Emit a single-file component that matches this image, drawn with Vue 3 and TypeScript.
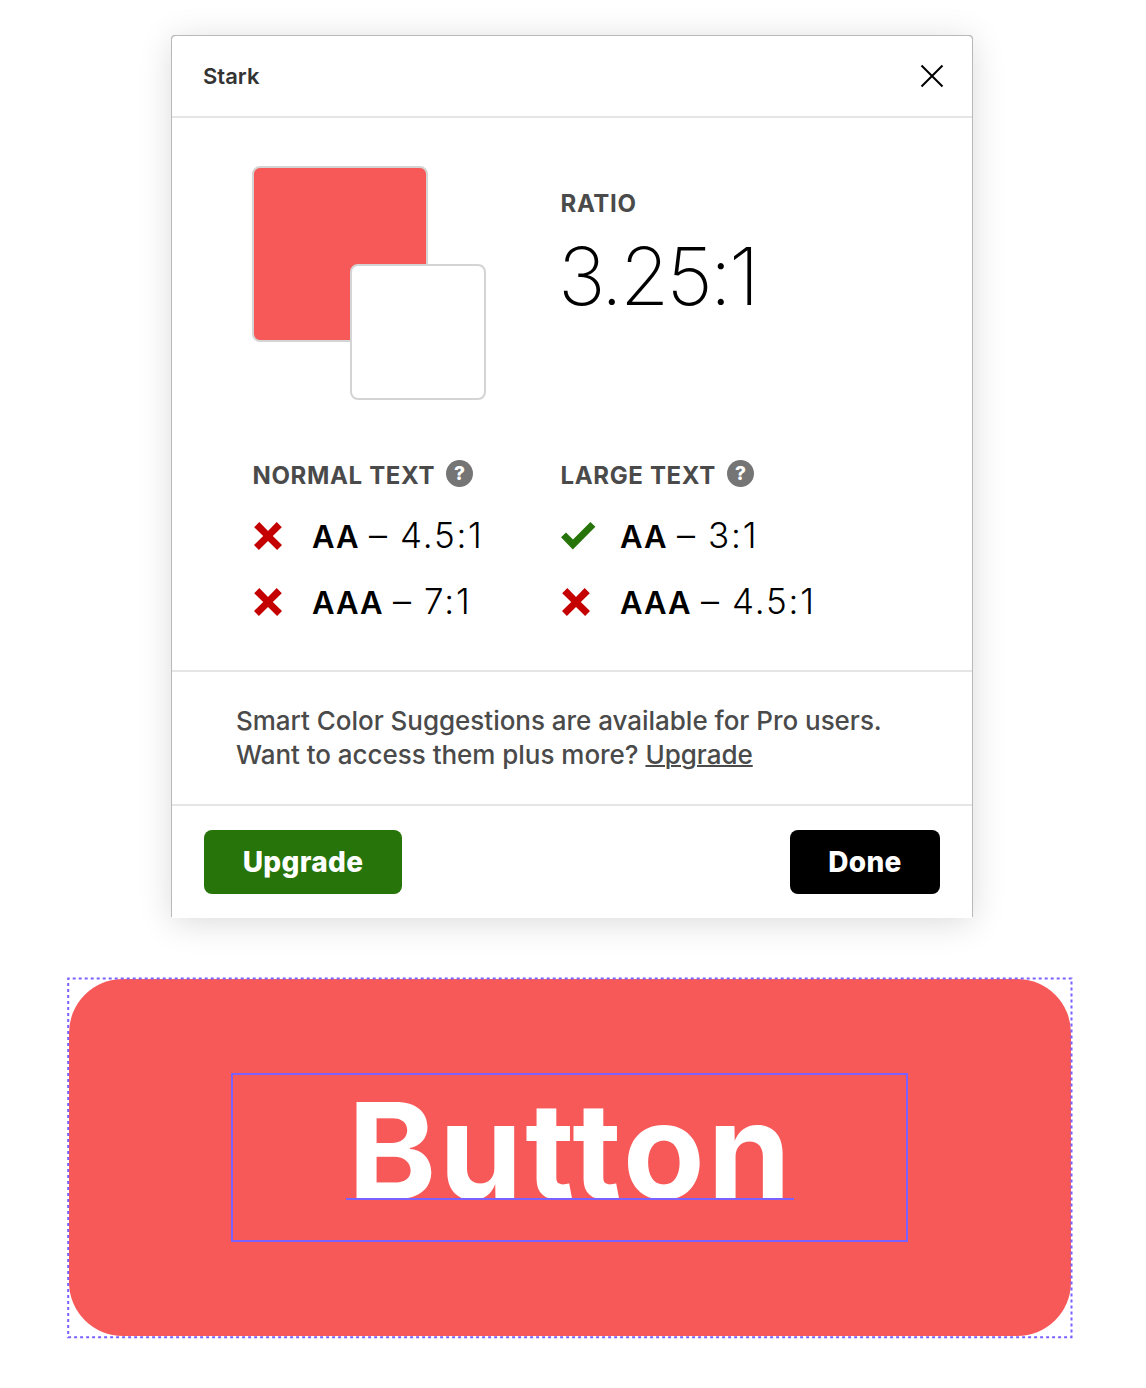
<script setup lang="ts">
interface Level {
  name: string
  ratio: string
  pass: boolean
}
interface Group {
  title: string
  levels: Level[]
}

const groups: Group[] = [
  {
    title: 'NORMAL TEXT',
    levels: [
      { name: 'AA', ratio: '4.5:1', pass: false },
      { name: 'AAA', ratio: '7:1', pass: false },
    ],
  },
  {
    title: 'LARGE TEXT',
    levels: [
      { name: 'AA', ratio: '3:1', pass: true },
      { name: 'AAA', ratio: '4.5:1', pass: false },
    ],
  },
]
</script>

<template>
  <div class="page">
    <section class="dialog">
      <header class="head">
        <h1 class="title">Stark</h1>
        <svg class="close" width="24" height="24" viewBox="0 0 24 24">
          <path d="M1.5 1.5 22.5 22.5M22.5 1.5 1.5 22.5" stroke="#000" stroke-width="2" fill="none" />
        </svg>
      </header>

      <div class="main">
        <div class="summary">
          <div class="swatches">
            <div class="swatch fg"></div>
            <div class="swatch bg"></div>
          </div>
          <div class="ratio">
            <div class="label">RATIO</div>
            <div class="value">3.25:1</div>
          </div>
        </div>

        <div class="groups">
          <div v-for="g in groups" :key="g.title" class="group">
            <div class="group-head">
              <span class="label">{{ g.title }}</span>
              <span class="help">?</span>
            </div>
            <div v-for="l in g.levels" :key="l.name" class="level">
              <span class="mark">
                <svg v-if="l.pass" class="tick" width="36" height="28" viewBox="0 0 36 28">
                  <path d="M0 15.2 5 10.4 12 17.4 29.4 0 34.4 4.8 11.8 27.4Z" fill="#27740a" />
                </svg>
                <svg v-else width="28" height="28" viewBox="0 0 28 28">
                  <path d="M5.3 0 14 8.9 22.7 0 27.8 5.2 18.8 14 28 22.9 23.1 28 14 18.9 4.9 28 0 22.9 9.2 14.1.2 5.2Z" fill="#c40000" />
                </svg>
              </span>
              <b class="name">{{ l.name }}</b>
              <span class="dash">–</span>
              <span class="need">{{ l.ratio }}</span>
            </div>
          </div>
        </div>
      </div>

      <p class="promo">
        Smart Color Suggestions are available for Pro users.<br />
        Want to access them plus more? <a class="link">Upgrade</a>
      </p>

      <footer class="foot">
        <button class="btn green">Upgrade</button>
        <button class="btn black">Done</button>
      </footer>
    </section>

    <section class="canvas">
      <div class="shape">
        <div class="textbox">
          <span class="caption">Button<i class="baseline"></i></span>
        </div>
      </div>
      <svg class="outline" width="1006" height="362" viewBox="0 0 1006 362">
        <rect x="1.2" y="1.4" width="1003.3" height="358.8" fill="none" stroke="#7b61ff" stroke-width="2" stroke-dasharray="3 3" stroke-dashoffset="1.5" />
      </svg>
    </section>
  </div>
</template>

<style>
body {
  margin: 0;
  background: #fff;
}
</style>

<style scoped>
.page {
  box-sizing: border-box;
  width: 1146px;
  height: 1388px;
  padding-top: 36px;
  overflow: hidden;
  background: #fff;
  font-family: Inter, "Liberation Sans", sans-serif;
  -webkit-font-smoothing: antialiased;
}
.dialog {
  width: 800px;
  height: 882px;
  margin-left: 172px;
  display: flex;
  flex-direction: column;
  background: #fff;
  border-radius: 4px 4px 0 0;
  box-shadow: 0 -1px 0 0 #b9b9b9, 1px -1px 0 0 #b9b9b9, -1px -1px 0 0 #b9b9b9, 0 4px 34px rgba(0, 0, 0, 0.15);
}
.head {
  box-sizing: border-box;
  height: 82px;
  padding: 0 28px 0 31px;
  display: flex;
  align-items: center;
  justify-content: space-between;
  border-bottom: 2px solid #e5e5e5;
}
.title {
  margin: 0;
  font-size: 22px;
  line-height: 28px;
  font-weight: 600;
  color: #333;
}
.close {
  display: block;
}
.main {
  box-sizing: border-box;
  height: 554px;
  padding: 48px 80px 0;
  border-bottom: 2px solid #e5e5e5;
}
.summary {
  display: flex;
  height: 234px;
}
.swatches {
  position: relative;
  width: 308px;
}
.swatch {
  box-sizing: border-box;
  border: 2px solid #d4d4d4;
  border-radius: 8px;
}
.fg {
  width: 176px;
  height: 176px;
  background: #f75959;
}
.bg {
  position: absolute;
  left: 98px;
  top: 98px;
  width: 136px;
  height: 136px;
  background: #fff;
}
.ratio {
  padding-top: 23px;
}
.label {
  margin-left: 0.5px;
  font-size: 24px;
  line-height: 30px;
  font-weight: 700;
  letter-spacing: 0.65px;
  color: #4a4a4a;
}
.value {
  margin: 8px 0 0 -2px;
  font-size: 80px;
  line-height: 98px;
  font-weight: 200;
  letter-spacing: -2.9px;
  color: #000;
}
.groups {
  display: flex;
  padding-top: 58px;
}
.group {
  width: 308px;
}
.group-head {
  display: flex;
  align-items: flex-start;
  gap: 11px;
  height: 44px;
  padding-top: 3px;
  box-sizing: border-box;
  white-space: nowrap;
}
.help {
  width: 27px;
  height: 27px;
  margin-top: -1px;
  border-radius: 50%;
  background: #757575;
  color: #fff;
  font-size: 19px;
  line-height: 27px;
  font-weight: 800;
  text-align: center;
}
.level {
  display: flex;
  align-items: baseline;
  height: 66px;
  line-height: 66px;
  white-space: nowrap;
  color: #000;
}
.mark {
  width: 60px;
  display: flex;
  align-self: center;
  padding: 1px 0 0 2px;
  box-sizing: border-box;
}
.tick {
  margin-left: -1px;
}
.name {
  font-size: 31px;
  font-weight: 600;
  letter-spacing: 1px;
}
.dash {
  margin-left: 9.5px;
  font-size: 36px;
  font-weight: 300;
}
.need {
  margin-left: 13px;
  font-size: 35px;
  font-weight: 300;
  letter-spacing: 1.8px;
}
.promo {
  box-sizing: border-box;
  height: 134px;
  margin: 0;
  padding: 32px 64px 0;
  border-bottom: 2px solid #e5e5e5;
  font-size: 26px;
  line-height: 34px;
  font-weight: 500;
  letter-spacing: -0.03px;
  color: #4a4a4a;
  white-space: nowrap;
}
.link {
  text-decoration: underline;
  text-decoration-thickness: 2px;
}
.foot {
  display: flex;
  justify-content: space-between;
  padding: 24px 32px;
}
.btn {
  height: 64px;
  padding: 0;
  border: 0;
  border-radius: 8px;
  font: 800 28px/64px Inter, sans-serif;
  letter-spacing: 0.3px;
  color: #fff;
}
.green {
  width: 198px;
  background: #27740a;
}
.black {
  width: 150px;
  background: #000;
}
.canvas {
  position: relative;
  width: 1006px;
  height: 362px;
  margin: 59px 0 0 67px;
}
.outline {
  position: absolute;
  left: 0;
  top: 0;
}
.shape {
  box-sizing: border-box;
  width: 1001.5px;
  height: 357px;
  margin-left: 2px;
  border-radius: 54px;
  background: #f75959;
  display: flex;
  justify-content: center;
  padding-top: 94px;
  transform: translateY(2px);
}
.textbox {
  box-sizing: border-box;
  width: 677px;
  height: 169px;
  border: 2px solid #7b61ff;
  text-align: center;
}
.caption {
  position: relative;
  display: inline-block;
  padding-left: 2px;
  font-size: 134px;
  line-height: 151px;
  font-weight: 700;
  letter-spacing: 2.7px;
  color: #fff;
}
.baseline {
  position: absolute;
  left: 0;
  right: 0;
  top: 123px;
  height: 2px;
  background: #7b61ff;
}
</style>
